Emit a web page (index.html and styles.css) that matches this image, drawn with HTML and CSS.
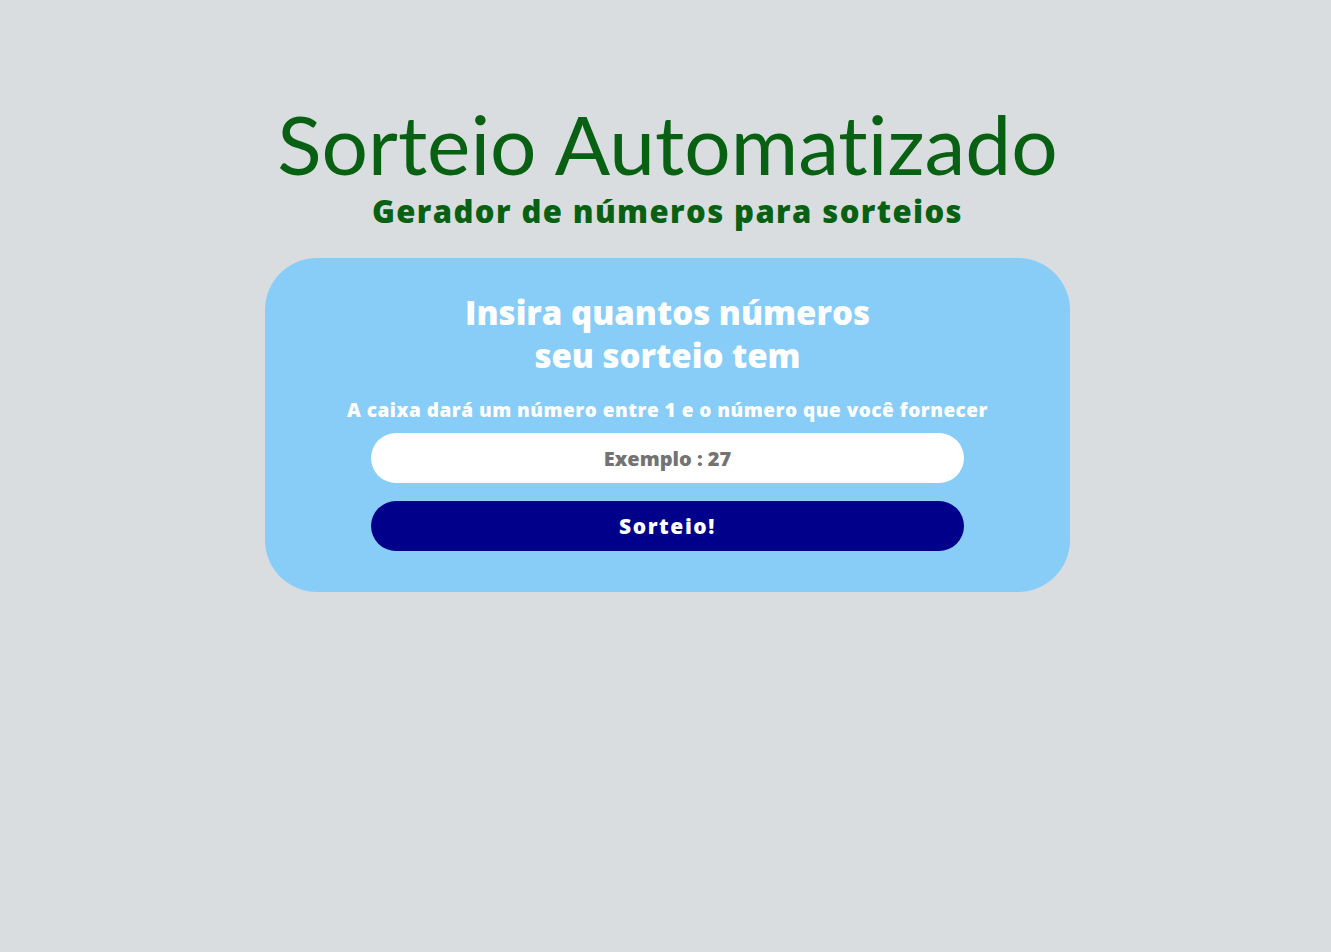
FILE: index.html
```html
<!DOCTYPE html>
<html lang="pt-BR">
<head>
<meta charset="utf-8">
<title>Sorteio Automatizado</title>
<link rel="stylesheet" href="styles.css">
</head>
<body>
<header class="header">
  <h1 class="title">Sorteio Automatizado</h1>
  <h2 class="subtitle">Gerador de números para sorteios</h2>
</header>
<main class="card">
  <h3 class="card-title">Insira quantos números<br>seu sorteio tem</h3>
  <p class="card-text">A caixa dará um número entre 1 e o número que você fornecer</p>
  <input class="field" type="number" placeholder="Exemplo : 27">
  <button class="btn" type="button">Sorteio!</button>
</main>
</body>
</html>
```

FILE: styles.css
```css
html, body {
  margin: 0;
  padding: 0;
}
body {
  background: #d9dde0;
  font-family: "Open Sans", "Lato", sans-serif;
  min-height: 952px;
  padding-left: 4px;
  box-sizing: border-box;
  display: flex;
  flex-direction: column;
  align-items: center;
}
.header {
  display: flex;
  flex-direction: column;
  align-items: center;
  padding-top: 101px;
  color: #086112;
}
.title {
  margin: 0;
  font-family: "Lato", sans-serif;
  font-weight: 400;
  font-size: 82px;
  line-height: 84px;
  font-variant-ligatures: none;
}
.subtitle {
  margin: 8px 0 0;
  font-weight: 800;
  font-size: 31px;
  line-height: 36px;
  letter-spacing: 1.4px;
}
.card {
  margin-top: 29px;
  width: 805px;
  height: 334px;
  box-sizing: border-box;
  background: #88cdf7;
  border-radius: 52px;
  display: flex;
  flex-direction: column;
  align-items: center;
  padding-top: 33px;
  color: #fff;
}
.card-title {
  margin: 0;
  text-align: center;
  font-weight: 800;
  font-size: 33px;
  line-height: 43px;
}
.card-text {
  margin: 21px 0 11px;
  font-weight: 800;
  font-size: 19px;
  line-height: 24px;
  letter-spacing: 0.5px;
}
.field {
  width: 593px;
  height: 50px;
  box-sizing: border-box;
  border: none;
  border-radius: 25px;
  background: #fff;
  text-align: center;
  font-family: inherit;
  font-weight: 800;
  font-size: 20px;
  outline: none;
  -moz-appearance: textfield;
  appearance: textfield;
}
.field::-webkit-inner-spin-button,
.field::-webkit-outer-spin-button {
  -webkit-appearance: none;
  margin: 0;
}
.field::placeholder {
  color: #737373;
}
.btn {
  margin-top: 18px;
  width: 593px;
  height: 50px;
  border: none;
  border-radius: 25px;
  background: #00008b;
  color: #fff;
  font-family: inherit;
  font-weight: 800;
  font-size: 21px;
  letter-spacing: 1.6px;
}
```
